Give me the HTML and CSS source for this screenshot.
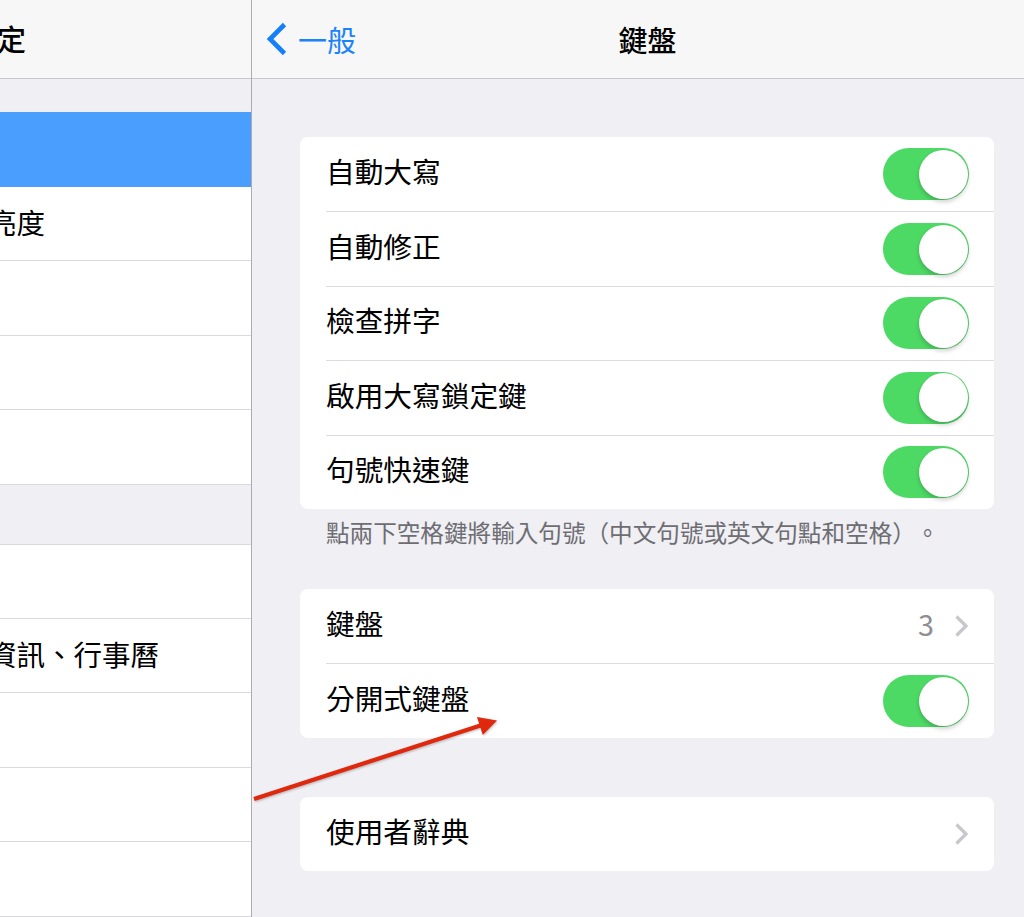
FILE: index.html
```html
<!DOCTYPE html>
<html lang="zh-Hant">
<head>
<meta charset="UTF-8">
<meta name="viewport" content="width=device-width, initial-scale=1.0">
<title>鍵盤</title>
<link rel="stylesheet" href="styles.css">
</head>
<body>
    <div class="screen">
        <!-- 왼쪽 설정 목록 (잘려서 일부만 보임) -->
        <div class="side">
            <div class="side-head"><span class="side-title">定</span></div>
            <div class="side-group first">
                <div class="side-row selected"></div>
                <div class="side-row"><span class="side-label">亮度</span></div>
                <div class="side-row"></div>
                <div class="side-row"></div>
                <div class="side-row"></div>
            </div>
            <div class="side-group">
                <div class="side-row"></div>
                <div class="side-row"><span class="side-label">資訊、行事曆</span></div>
                <div class="side-row"></div>
                <div class="side-row"></div>
                <div class="side-row"></div>
            </div>
        </div>

        <!-- 오른쪽 키보드 설정 -->
        <div class="main">
            <div class="main-head">
                <a class="back" href="#">
                    <svg class="back-icon" width="22" height="34" viewBox="0 0 22 34">
                        <polyline points="18.5,2.5 4,17 18.5,31.5" />
                    </svg>
                    <span>一般</span>
                </a>
                <span class="main-title">鍵盤</span>
                <span></span>
            </div>

            <div class="card first">
                <div class="row"><span class="label">自動大寫</span><span class="switch"><span class="knob"></span></span></div>
                <div class="row"><span class="label">自動修正</span><span class="switch"><span class="knob"></span></span></div>
                <div class="row"><span class="label">檢查拼字</span><span class="switch"><span class="knob"></span></span></div>
                <div class="row"><span class="label">啟用大寫鎖定鍵</span><span class="switch"><span class="knob"></span></span></div>
                <div class="row"><span class="label">句號快速鍵</span><span class="switch"><span class="knob"></span></span></div>
            </div>
            <p class="note">點兩下空格鍵將輸入句號（中文句號或英文句點和空格）。</p>

            <div class="card">
                <div class="row">
                    <span class="label">鍵盤</span>
                    <span class="detail">
                        <span class="value">3</span>
                        <svg class="chev" width="15" height="24" viewBox="0 0 15 24"><polyline points="2.5,2.5 12,12 2.5,21.5" /></svg>
                    </span>
                </div>
                <div class="row"><span class="label">分開式鍵盤</span><span class="switch"><span class="knob"></span></span></div>
            </div>

            <div class="card gap">
                <div class="row">
                    <span class="label">使用者辭典</span>
                    <span class="detail">
                        <svg class="chev" width="15" height="24" viewBox="0 0 15 24"><polyline points="2.5,2.5 12,12 2.5,21.5" /></svg>
                    </span>
                </div>
            </div>
        </div>
    </div>

    <!-- 빨간 화살표 표시 (화면 위에 덮음) -->
    <svg class="arrow" width="1024" height="917" viewBox="0 0 1024 917">
        <line x1="254" y1="799" x2="482" y2="725" />
        <polygon points="497,720.5 482.8,735.1 477,717.1" />
    </svg>
</body>
</html>
```

FILE: styles.css
```css
body{
    margin: 0;
    font-family: "Noto Sans CJK TC", "Noto Sans", sans-serif;
    color: #000;
    position: relative;
    overflow: hidden;
    text-spacing-trim: space-all;
}
.screen{
    display: flex;
    width: 1024px;
    height: 917px;
    overflow: hidden;
    background: #efeff4;
}
/* 왼쪽 목록 */
.side{
    width: 251px;
    flex: none;
    border-right: 1px solid #ababb0;
    overflow: hidden;
}
.side-head{
    height: 78px;
    background: #f7f7f7;
    border-bottom: 1px solid #c8c7cc;
    display: flex;
    align-items: center;
}
.side-title{
    font-size: 29px;
    font-weight: 500;
    margin-left: -3px;
    line-height: 1;
    padding-bottom: 2px;
}
.side-group{
    margin-top: 59px;
    border-top: 1px solid #d9d9dd;
    background: #fff;
}
.side-group.first{
    margin-top: 33px;
    border-top: none;
}
.side-row{
    height: 74.4px;
    box-sizing: border-box;
    border-bottom: 1px solid #dadade;
    display: flex;
    align-items: center;
}
.side-row.selected{
    height: 75px;
    background: #4a9efd;
    border-bottom: none;
}
.side-label{
    font-size: 28.5px;
    margin-left: -12px;
    white-space: nowrap;
    line-height: 1;
    padding-bottom: 2px;
}
/* 오른쪽 본문 */
.main{
    flex: 1;
}
.main-head{
    height: 78px;
    background: #f7f7f7;
    border-bottom: 1px solid #c8c7cc;
    display: grid;
    grid-template-columns: 1fr auto 1fr;
    align-items: center;
    padding-left: 19px;
}
.back{
    display: flex;
    align-items: center;
    margin-left: -5px;
    color: #1a82fb;
    text-decoration: none;
    font-size: 29px;
}
.back-icon{
    margin-right: 10px;
}
.back-icon polyline{
    fill: none;
    stroke: #157efb;
    stroke-width: 4.6;
}
.main-title{
    font-size: 29px;
    font-weight: 500;
}
.card{
    margin: 0 30px 0 48px;
    background: #fff;
    border-radius: 8px;
    padding-left: 26px;
}
.card.first{
    margin-top: 58px;
}
.card.gap{
    margin-top: 59px;
}
.row{
    height: 74.4px;
    box-sizing: border-box;
    padding-right: 25px;
    display: flex;
    align-items: center;
    justify-content: space-between;
    font-size: 28.7px;
}
.row + .row{
    border-top: 1px solid #dcdce0;
}
.label{
    line-height: 1;
    padding-bottom: 6px;
}
.switch{
    width: 86px;
    height: 52px;
    box-sizing: border-box;
    border-radius: 26px;
    background: #4cd964;
    padding: 1.5px;
    display: flex;
    justify-content: flex-end;
}
.knob{
    width: 49px;
    height: 49px;
    border-radius: 50%;
    background: #fff;
    box-shadow: 0 3px 4px rgba(0, 0, 0, 0.18), 0 0 1px rgba(0, 0, 0, 0.15);
}
.detail{
    display: flex;
    align-items: center;
}
.value{
    color: #8e8e93;
    margin-right: 20px;
    line-height: 1;
    padding-bottom: 4px;
}
.chev polyline{
    fill: none;
    stroke: #c7c7cc;
    stroke-width: 3.2;
}
.note{
    margin: 0 30px 0 48px;
    padding: 7px 0 0 26px;
    height: 80px;
    box-sizing: border-box;
    font-size: 23.6px;
    line-height: 32px;
    color: #6d6d72;
    white-space: nowrap;
}
/* 빨간 화살표 */
.arrow{
    position: absolute;
    top: 0;
    left: 0;
    pointer-events: none;
    filter: drop-shadow(1px 1px 1px rgba(0, 0, 0, 0.25));
}
.arrow line{
    stroke: #e0280c;
    stroke-width: 4.2;
}
.arrow polygon{
    fill: #e0280c;
}
```
